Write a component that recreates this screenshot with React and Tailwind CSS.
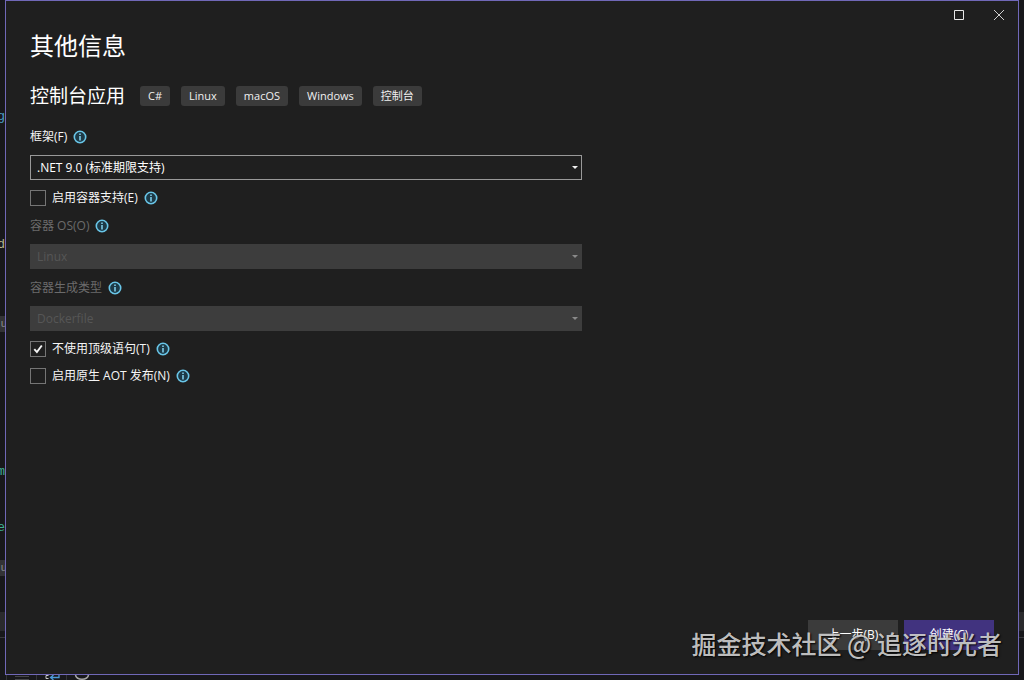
const tags = ["C#", "Linux", "macOS", "Windows", "控制台"];

const editorBits = [
  { text: "g", className: "top-[109px] right-0 text-[#4a9cc4]" },
  { text: "d", className: "top-[237px] right-0 text-[#b5b58c]" },
  { text: "u", className: "top-[316px] -right-0.5 bg-[#333336] text-[#8a8a8a] text-[11px]" },
  { text: "m", className: "top-[464px] right-0 text-[#3fae92]" },
  { text: "e", className: "top-[520px] right-0 text-[#3fae92]" },
  { text: "u", className: "top-[560px] -right-0.5 bg-[#333336] text-[#8a8a8a] text-[11px]" },
];

function InfoIcon() {
  return (
    <svg viewBox="0 0 14 14" className="size-3.5 shrink-0" role="img" aria-label="信息">
      <circle cx="7" cy="7" r="5.7" fill="#1d3a47" stroke="#69c6e8" strokeWidth="1.6" />
      <path d="M6.2 3.5h1.6v1.5H6.2zM6.2 6h1.6v4.600H6.2z" fill="#7fcbe6" />
    </svg>
  );
}

function Field({ id, label, value, disabled, className }) {
  return (
    <div className={`flex flex-col gap-[9px] ${className}`}>
      <div className="flex h-[18px] items-center gap-1.5">
        <label htmlFor={id} className={disabled ? "text-[#6b6b6b]" : "text-[#f5f5f5]"}>
          {label}
        </label>
        <InfoIcon />
      </div>
      <div className="relative">
        <select
          id={id}
          disabled={disabled}
          className="block h-[25px] w-full appearance-none border border-[#999999] bg-[#1f1f1f] px-1.5 text-white opacity-100 disabled:border-[#3d3d3d] disabled:bg-[#3d3d3d] disabled:text-[#565656]"
        >
          <option>{value}</option>
        </select>
        <svg
          viewBox="0 0 6 3"
          className={`pointer-events-none absolute top-[11px] right-1 h-[3px] w-1.5 ${
            disabled ? "fill-[#8a8a8a]" : "fill-[#f0f0f0]"
          }`}
        >
          <path d="M0 0h6L3 3z" />
        </svg>
      </div>
    </div>
  );
}

function CheckRow({ label, checked }) {
  return (
    <div className="mt-[9px] flex h-[18px] items-center gap-1.5">
      <label className="flex items-center gap-1.5 text-[#f5f5f5]">
        <span className="relative flex size-4">
          <input
            type="checkbox"
            defaultChecked={checked}
            className="peer size-4 appearance-none border border-[#757575] bg-[#1f1f1f]"
          />
          <svg
            viewBox="0 0 16 16"
            className="pointer-events-none absolute inset-0 hidden size-4 peer-checked:block"
          >
            <path d="M4.3 8.2l2.6 2.9 4.9-6.600" fill="none" stroke="#f5f5f5" strokeWidth="1.9" />
          </svg>
        </span>
        {label}
      </label>
      <InfoIcon />
    </div>
  );
}

function EditorBackdrop() {
  return (
    <div aria-hidden="true" className="absolute inset-0 overflow-hidden">
      <div className="absolute inset-y-0 left-0 w-[5px] overflow-hidden font-['Liberation_Mono',monospace] text-[13px] leading-4">
        <div className="absolute top-[612px] h-[19px] w-full bg-[#2a2a2d]" />
        <div className="absolute top-[637px] h-px w-full bg-[#39393d]" />
        {editorBits.map((bit, i) => (
          <span key={i} className={`absolute ${bit.className}`}>
            {bit.text}
          </span>
        ))}
      </div>
      <div className="absolute top-[612px] right-0 h-[19px] w-[5px] bg-[#2a2a2d]" />
      <div className="absolute top-[637px] right-0 h-px w-[5px] bg-[#39393d]" />
      <svg viewBox="0 0 100 5" className="absolute bottom-0 left-0 h-[5px] w-[100px]" fill="none">
        <path d="M15 1.5h14M15 4.5h14" stroke="#46464a" />
        <path d="M6.5 0v5M36.5 0v5M66.5 0v5" stroke="#333338" />
        <path d="M48.5 .5H46v3h2.5" stroke="#c8c8c8" />
        <path d="M59 0v2.500h-8M53.500 0l-3 2.500 3 2.500" stroke="#4b9bd8" strokeWidth="1.3" />
        <path d="M75.500 0c1 5.500 12 5.500 13 0" stroke="#a8a8a8" strokeWidth="1.5" />
      </svg>
    </div>
  );
}

export default function App() {
  return (
    <div className="relative flex min-h-screen flex-col bg-[#18181b] px-[5px] pb-[5px] font-['Open_Sans','Noto_Sans_CJK_SC',sans-serif] text-[12px] leading-[18px]">
      <EditorBackdrop />
      <main className="relative flex flex-1 flex-col border border-[#7068b8] bg-[#1f1f1f]">
        <div className="flex h-7 justify-end gap-0.5">
          <button type="button" aria-label="最大化" className="flex w-[38px] items-center justify-center">
            <svg viewBox="0 0 10 10" className="size-2.5" fill="none" stroke="#e8e8e8">
              <path d="M.5.5h9v9h-9z" />
            </svg>
          </button>
          <button type="button" aria-label="关闭" className="flex w-[38px] items-center justify-center">
            <svg viewBox="0 0 10 10" className="size-2.5" fill="none" stroke="#d0d0d0">
              <path d="M0 0l10 10M10 0L0 10" />
            </svg>
          </button>
        </div>

        <div className="flex flex-1 flex-col px-6 pt-px pb-6">
          <h1 className="text-[24px] leading-8 text-white">其他信息</h1>
          <div className="mt-5 flex flex-wrap items-center gap-[15px]">
            <h2 className="text-[19px] leading-7 text-white">控制台应用</h2>
            <ul className="flex flex-wrap gap-[11px]">
              {tags.map((tag) => (
                <li
                  key={tag}
                  className="flex h-5 items-center rounded-[3px] bg-[#3b3b3b] px-2 text-[11px] text-[#f0f0f0]"
                >
                  {tag}
                </li>
              ))}
            </ul>
          </div>

          <form className="flex w-full max-w-[552px] flex-col">
            <Field id="framework" label="框架(F)" value=".NET 9.0 (标准期限支持)" className="mt-[18px]" />
            <CheckRow label="启用容器支持(E)" />
            <Field id="container-os" label="容器 OS(O)" value="Linux" disabled className="mt-2.5" />
            <Field id="build-type" label="容器生成类型" value="Dockerfile" disabled className="mt-2.5" />
            <CheckRow label="不使用顶级语句(T)" checked />
            <CheckRow label="启用原生 AOT 发布(N)" />
          </form>

          <div className="mt-auto flex justify-end gap-1.5">
            <button type="button" className="h-[30px] w-[90px] bg-[#3b3b3b] text-white">
              上一步(B)
            </button>
            <button type="button" className="h-[30px] w-[90px] bg-[#41337f] text-white">
              创建(C)
            </button>
          </div>
        </div>
      </main>
      <p className="pointer-events-none absolute right-[22px] bottom-[21px] font-['Noto_Sans_CJK_SC',sans-serif] text-[25px] leading-8 font-medium whitespace-nowrap text-[#d6d6d6]/90 [text-shadow:1px_1px_2px_#000000]">
        掘金技术社区 @ 追逐时光者
      </p>
    </div>
  );
}
